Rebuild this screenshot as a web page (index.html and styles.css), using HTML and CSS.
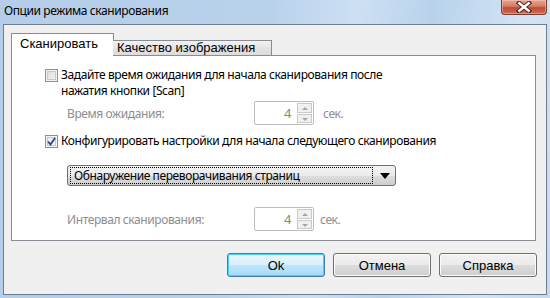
FILE: index.html
```html
<!DOCTYPE html>
<html lang="ru">
<head>
<meta charset="utf-8">
<title>Опции режима сканирования</title>
<link rel="stylesheet" href="styles.css">
</head>
<body>
<div class="window">
  <div class="titlebar">
    <span class="title">Опции режима сканирования</span>
    <button class="close" aria-label="Закрыть">
      <svg width="18" height="12" viewBox="0 0 18 12">
        <path d="M4 2 L14 10 M14 2 L4 10" stroke="#4a2a24" stroke-width="4.4" stroke-linecap="square"/>
        <path d="M4.3 2.3 L13.7 9.7 M13.7 2.3 L4.3 9.7" stroke="#ffffff" stroke-width="2.4" stroke-linecap="square"/>
      </svg>
    </button>
  </div>
  <div class="client">
    <div class="tabs">
      <div class="tab active">Сканировать</div>
      <div class="tab">Качество изображения</div>
    </div>
    <div class="panel">
      <div class="check-row first">
        <span class="box"></span>
        <span class="label">Задайте время ожидания для начала сканирования после<br>нажатия кнопки [Scan]</span>
      </div>
      <div class="field-row wait">
        <span class="field-label">Время ожидания:</span>
        <div class="spin">
          <span class="spin-value">4</span>
          <span class="spin-btns"><span class="up"></span><span class="down"></span></span>
        </div>
        <span class="unit">сек.</span>
      </div>
      <div class="check-row second">
        <span class="box checked">
          <svg width="9" height="9" viewBox="0 0 9 9"><path d="M1 4.5 L3.5 7.5 L8 1" fill="none" stroke="#2a3f8f" stroke-width="1.8"/></svg>
        </span>
        <span class="label">Конфигурировать настройки для начала следующего сканирования</span>
      </div>
      <div class="combo">
        <span class="combo-text">Обнаружение переворачивания страниц</span>
        <span class="combo-arrow"></span>
      </div>
      <div class="field-row interval">
        <span class="field-label">Интервал сканирования:</span>
        <div class="spin">
          <span class="spin-value">4</span>
          <span class="spin-btns"><span class="up"></span><span class="down"></span></span>
        </div>
        <span class="unit">сек.</span>
      </div>
    </div>
    <div class="buttons">
      <button class="btn default">Ok</button>
      <button class="btn">Отмена</button>
      <button class="btn">Справка</button>
    </div>
  </div>
</div>
</body>
</html>
```

FILE: styles.css
```css
html, body {
  margin: 0;
  padding: 0;
}
body {
  width: 550px;
  height: 298px;
  overflow: hidden;
  font-family: "Noto Sans", "Liberation Sans", sans-serif;
  font-size: 12px;
  letter-spacing: -0.4px;
  color: #000;
}
.window {
  width: 550px;
  height: 298px;
  box-sizing: border-box;
  background: linear-gradient(100deg, #b4cde8 0%, #b9d2ec 45%, #cde0f3 60%, #b9d2ec 72%, #d3e4f5 88%, #c4daf0 100%);
  display: flex;
  flex-direction: column;
  padding: 0 3px 3px 3px;
}
.titlebar {
  height: 24px;
  display: flex;
  justify-content: space-between;
  align-items: flex-start;
}
.title {
  padding-left: 1px;
  line-height: 22px;
  font-size: 12px;
  color: #000;
}
.close {
  width: 46px;
  height: 15px;
  padding: 0;
  border: 1px solid #7a3a2e;
  border-top: none;
  border-radius: 0 0 4px 4px;
  background: linear-gradient(#e6a592 0%, #d47b66 45%, #c24a33 55%, #cf6a4e 100%);
  box-shadow: inset 0 0 0 1px rgba(255, 210, 200, 0.45);
  display: flex;
  align-items: center;
  justify-content: center;
}
.client {
  flex: 1;
  border: 1px solid #6d7d8f;
  background: #f0f0f0;
  padding: 8px 10px 0 7px;
  display: flex;
  flex-direction: column;
}
.tabs {
  display: flex;
  align-items: flex-end;
  height: 22px;
  position: relative;
  z-index: 1;
}
.tab {
  font-family: "Liberation Sans", Arial, sans-serif;
  font-size: 13px;
  letter-spacing: 0;
  border: 1px solid #898c95;
  border-bottom: none;
  box-sizing: border-box;
}
.tab.active {
  background: #fff;
  height: 23px;
  margin-bottom: -1px;
  padding: 0 11px 0 8px;
  line-height: 20px;
  width: 103px;
}
.tab:not(.active) {
  height: 15px;
  line-height: 14px;
  width: 159px;
  padding-left: 4px;
  margin-left: -1px;
  background: linear-gradient(#f3f3f3, #e4e4e4 50%, #dcdcdc);
  border-left: none;
}
.panel {
  height: 186px;
  box-sizing: border-box;
  border: 1px solid #898c95;
  background: #fff;
  padding: 11px 0 0 33px;
  display: flex;
  flex-direction: column;
}
.check-row {
  display: flex;
  align-items: flex-start;
  line-height: 16px;
}
.box {
  width: 13px;
  height: 13px;
  box-sizing: border-box;
  border: 1px solid #8e8f8f;
  background: linear-gradient(135deg, #d8d8d8, #f6f6f6);
  box-shadow: inset 0 0 0 1px #f4f4f4, inset 0 0 0 2px #c8c8c8;
  margin-top: 2px;
  margin-right: 3px;
  flex: none;
  display: flex;
  align-items: center;
  justify-content: center;
}
.box.checked {
  background: linear-gradient(135deg, #e6e9ef, #ffffff);
}
.check-row.second {
  margin-top: 8px;
}
.field-row {
  display: flex;
  align-items: center;
  padding-left: 22px;
  color: #8d8d8d;
}
.field-row.wait {
  margin-top: 2px;
}
.field-row.interval {
  margin-top: 21px;
}
.field-label {
  width: 187px;
}
.spin {
  width: 60px;
  height: 24px;
  box-sizing: border-box;
  border: 1px solid #bdbdbd;
  border-radius: 2px;
  background: #fff;
  display: flex;
  align-items: stretch;
  padding: 1px 1px 1px 0;
}
.spin-value {
  flex: 1;
  text-align: right;
  padding-right: 6px;
  line-height: 20px;
  color: #8a8a6a;
  font-size: 13px;
}
.spin-btns {
  width: 15px;
  display: flex;
  flex-direction: column;
  gap: 1px;
}
.spin-btns span {
  flex: 1;
  border: 1px solid #c9c9c9;
  background: #f0f0f0;
  position: relative;
}
.spin-btns span::after {
  content: "";
  position: absolute;
  left: 4px;
  top: 3px;
  border-left: 3px solid transparent;
  border-right: 3px solid transparent;
}
.spin-btns .up::after {
  border-bottom: 3px solid #a6a6a6;
}
.spin-btns .down::after {
  border-top: 3px solid #a6a6a6;
}
.unit {
  margin-left: 9px;
}
.interval .unit {
  margin-left: 6px;
}
.combo {
  margin-top: 16px;
  margin-left: 22px;
  width: 329px;
  height: 21px;
  box-sizing: border-box;
  border: 1px solid #707070;
  border-radius: 3px;
  background: linear-gradient(#f2f2f2 0%, #ebebeb 50%, #dddddd 51%, #cfcfcf 100%);
  display: flex;
  align-items: center;
  padding: 1px 0 1px 2px;
}
.combo-text {
  width: 303px;
  height: 17px;
  box-sizing: border-box;
  border: 1px dotted #000;
  line-height: 15px;
  padding-left: 3px;
  color: #000;
}
.combo-arrow {
  margin-left: 7px;
  width: 0;
  height: 0;
  border-left: 5px solid transparent;
  border-right: 5px solid transparent;
  border-top: 6px solid #000;
}
.buttons {
  display: flex;
  justify-content: flex-end;
  gap: 8px;
  margin-top: 12px;
  margin-right: -1px;
}
.btn {
  width: 98px;
  height: 24px;
  box-sizing: border-box;
  font-family: "Liberation Sans", Arial, sans-serif;
  font-size: 13px;
  letter-spacing: 0;
  color: #000;
  border: 1px solid #707070;
  border-radius: 3px;
  background: linear-gradient(#f2f2f2 0%, #ebebeb 50%, #dddddd 51%, #cfcfcf 100%);
  box-shadow: inset 0 0 0 1px #fcfcfc;
  padding: 0;
}
.btn.default {
  border-color: #3c7fb1;
  background: linear-gradient(#eaf6fd 0%, #d9f0fc 50%, #bee6fd 51%, #a7d9f5 100%);
  box-shadow: inset 0 0 0 1px #48d0f8;
}
```
